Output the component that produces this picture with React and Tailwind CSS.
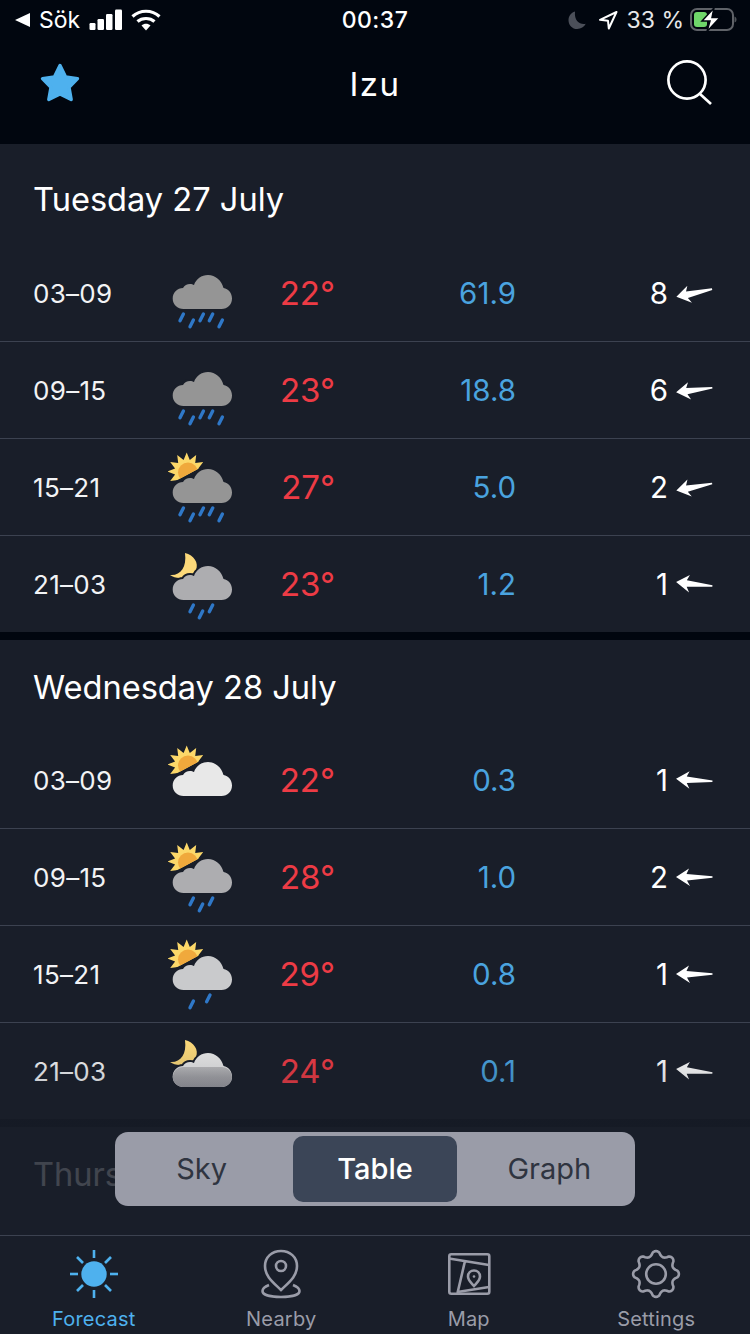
import { Fragment } from 'react';

const CLOUD = 'M15.5 54C9.5 54 4.7 49.5 4.7 43.5C4.7 37.5 9.5 33 15 33C16.5 30.5 19 29 22 29C23.5 29 25 29.5 26 30C28 24 33.5 20 40 20C47.5 20 53.5 25.5 55.5 33C60.5 34 64 38 64 43.5C64 49.5 59.5 54 53.5 54Z';

const DROPS = {
  5: [[13.7, 62.3], [23.7, 68.3], [33.7, 62.3], [43, 62.3], [52.7, 68.3]],
  3: [[23.7, 62.3], [33, 68.3], [43, 62.3]],
  2: [[23.7, 68.3], [40.3, 62.3]],
  0: [],
};

// 12 ray sun, one ray straight up
const sunPoints = Array.from({ length: 24 }, (_, i) => {
  const r = i % 2 === 0 ? 19 : 12;
  const a = (i * Math.PI) / 12 - Math.PI / 2;
  return `${(18.7 + r * Math.cos(a)).toFixed(1)},${(22.5 + r * Math.sin(a)).toFixed(1)}`;
}).join(' ');

const gearPath = Array.from({ length: 121 }, (_, i) => {
  const a = (i * Math.PI) / 60;
  const c = Math.cos(8 * a);
  const r = 20.5 + 2.4 * Math.sign(c) * Math.pow(Math.abs(c), 0.7);
  return `${i === 0 ? 'M' : 'L'}${(24 + r * Math.cos(a)).toFixed(2)} ${(24 + r * Math.sin(a)).toFixed(2)}`;
}).join('') + 'Z';

const WeatherIcon = ({ sky, cloud, drops = 0, fog }) => (
  <svg width="70" height="76" viewBox="0 0 70 76">
    {sky === 'sun' && (
      <g clipPath="url(#sky-cut)">
        <polygon points={sunPoints} fill="#fcd869" />
        <circle cx="20" cy="23.5" r="10" fill="#f0a93c" />
      </g>
    )}
    {sky === 'moon' && (
      <path d="M17 7C26 9 31 17 28 24C24 31 10 35 2 29C12 30 19 22 17 7Z" fill="#fcd97a" />
    )}
    <path d={CLOUD} fill={cloud} stroke="#191e29" strokeWidth="4" paintOrder="stroke" />
    {fog && <rect x="4.7" y="34" width="59.3" height="20" rx="10" fill="url(#fog-fill)" />}
    {DROPS[drops].map(([x, y], i) => (
      <line key={i} x1={x + 1.7} y1={y - 3.4} x2={x - 1.7} y2={y + 3.4} stroke="#2f78c8" strokeWidth="3.4" strokeLinecap="round" />
    ))}
  </svg>
);

const WindArrow = ({ angle }) => (
  <svg width="40" height="28" viewBox="-2 -14 40 28" className="overflow-visible">
    <polygon
      transform={`rotate(${angle} 18 0)`}
      points="0,0 13,-8.5 10.5,-3 36.5,-0.8 36.5,0.8 11,3.5 14,9"
      fill="#ffffff"
    />
  </svg>
);

const days = [
  {
    title: 'Tuesday 27 July',
    first: true,
    rows: [
      { time: '03–09', temp: '22°', rain: '61.9', wind: 8, angle: -12, icon: { cloud: '#959595', drops: 5 } },
      { time: '09–15', temp: '23°', rain: '18.8', wind: 6, angle: -7, icon: { cloud: '#959595', drops: 5 } },
      { time: '15–21', temp: '27°', rain: '5.0', wind: 2, angle: -11, icon: { sky: 'sun', cloud: '#959595', drops: 5 } },
      { time: '21–03', temp: '23°', rain: '1.2', wind: 1, angle: 6, icon: { sky: 'moon', cloud: '#adadb0', drops: 3 } },
    ],
  },
  {
    title: 'Wednesday 28 July',
    rows: [
      { time: '03–09', temp: '22°', rain: '0.3', wind: 1, angle: 4, icon: { sky: 'sun', cloud: '#e8e8e8' } },
      { time: '09–15', temp: '28°', rain: '1.0', wind: 2, angle: 0, icon: { sky: 'sun', cloud: '#adadb0', drops: 3 } },
      { time: '15–21', temp: '29°', rain: '0.8', wind: 1, angle: 0, icon: { sky: 'sun', cloud: '#c9cacc', drops: 2 } },
      { time: '21–03', temp: '24°', rain: '0.1', wind: 1, angle: 6, icon: { sky: 'moon', cloud: '#e8e8e8', fog: true } },
    ],
  },
  { title: 'Thursday 29 July', rows: [] },
];

const StatusBar = () => (
  <div className="grid h-[40px] grid-cols-[1fr_auto_1fr] items-center text-[23px] text-white">
    <div className="flex items-center">
      <svg width="16" height="14" viewBox="0 0 16 14" className="ml-[15px]">
        <polygon points="0,7 15,0 15,14" fill="#fff" />
      </svg>
      <span className="ml-[8px]">Sök</span>
      <svg width="34" height="22" viewBox="0 0 34 22" className="ml-[9px]">
        <rect x="0.5" y="14" width="6" height="7" rx="1.2" fill="#fff" />
        <rect x="8.5" y="10" width="6.5" height="11" rx="1.2" fill="#fff" />
        <rect x="17" y="5" width="6.5" height="16" rx="1.2" fill="#fff" />
        <rect x="26" y="0.5" width="7" height="20.5" rx="1.2" fill="#fff" />
      </svg>
      <svg width="30" height="24" viewBox="0 0 30 24" className="ml-[8px]">
        <path d="M1.5 8.5C9 1.5 21 1.5 28.5 8.5" fill="none" stroke="#fff" strokeWidth="3.2" />
        <path d="M6.5 13.5C11 9.5 19 9.5 23.5 13.5" fill="none" stroke="#fff" strokeWidth="3.2" />
        <path d="M10.5 17.5L15 22.5L19.5 17.5C17 15.3 13 15.3 10.5 17.5Z" fill="#fff" />
      </svg>
    </div>
    <span className="font-medium tracking-[0.5px]">00:37</span>
    <div className="flex items-center justify-end">
      <svg width="20" height="20" viewBox="0 0 20 20">
        <path d="M8 1.5C4 2.8 1.5 6 1.5 10.2C1.5 15.2 5.3 19 10.2 19C14 19 17 17 18.8 13.8C13 15 7 11 8 1.5Z" fill="#4b4f59" />
      </svg>
      <svg width="20" height="20" viewBox="0 0 20 20" className="ml-[11px]">
        <path d="M18.5 2L2 9.8L10 10.8L10.8 18.5Z" fill="none" stroke="#fff" strokeWidth="2" strokeLinejoin="round" />
      </svg>
      <span className="ml-[9px] text-[#e6e6e8]">33 %</span>
      <svg width="47" height="24" viewBox="0 0 47 24" className="ml-[6px] mr-[13px]">
        <rect x="1" y="1" width="42" height="21" rx="6" fill="none" stroke="#5f6268" strokeWidth="2" />
        <rect x="4" y="4" width="13" height="15" rx="3" fill="#6fd66a" />
        <path d="M44.5 8.5C46 9 46.5 10 46.5 11.5C46.5 13 46 14 44.5 14.5Z" fill="#4f5258" />
        <path d="M24 0L12 13H20L17 23.5L30 9.5H22Z" fill="#fff" stroke="#01060f" strokeWidth="1.5" />
      </svg>
    </div>
  </div>
);

const NavBar = () => (
  <div className="flex h-[104px] items-start justify-between">
    <svg width="44" height="44" viewBox="0 0 44 44" className="ml-[38px] mt-[21px]">
      <path d="M22 4.5L27.6 16L39.5 17.6L31 26.4L33.2 38.5L22 33L10.8 38.5L13 26.4L4.5 17.6L16.4 16Z" fill="#4eb1ee" stroke="#4eb1ee" strokeWidth="3.4" strokeLinejoin="round" />
    </svg>
    <span className="ml-[4px] mt-[20px] text-[33px] tracking-[1.5px] text-white">Izu</span>
    <svg width="50" height="50" viewBox="0 0 50 50" className="mr-[36px] mt-[18px]">
      <circle cx="23" cy="22" r="18.6" fill="none" stroke="#fff" strokeWidth="2.7" />
      <line x1="36" y1="36" x2="47" y2="46" stroke="#fff" strokeWidth="2.7" />
    </svg>
  </div>
);

const ForecastRow = ({ row, last }) => (
  <div className={`flex items-center pl-[33px] ${last ? 'h-[96px]' : 'h-[97px] border-b border-[#3c4250]'}`}>
    <span className="w-[135px] text-[26px] tracking-[0.3px] text-[#f2f3f5]">{row.time}</span>
    <div className="w-[70px]">
      <WeatherIcon {...row.icon} />
    </div>
    <span className="mt-[2px] w-[97px] text-right text-[33px] text-[#ed3b45]">{row.temp}</span>
    <span className="mt-[1px] w-[181px] text-right text-[29.5px] text-[#4aa3df]">{row.rain}</span>
    <span className="mt-[1px] w-[152px] text-right text-[29.5px] text-white">{row.wind}</span>
    <div className="ml-[6px]">
      <WindArrow angle={row.angle} />
    </div>
  </div>
);

const DaySection = ({ day }) => (
  <Fragment>
    <div className={`flex items-center pl-[33px] ${day.first ? 'h-[101px] pt-[10px]' : 'h-[92px] pt-[2px]'}`}>
      <h2 className="text-[32.6px] text-white">{day.title}</h2>
    </div>
    {day.rows.map((row, i) => (
      <ForecastRow key={i} row={row} last={i === day.rows.length - 1} />
    ))}
    {day.rows.length > 0 && <div className="h-[8px] bg-[#01060f]" />}
  </Fragment>
);

const SegmentedControl = () => (
  <div className="absolute left-[115px] top-[988px] grid h-[74px] w-[520px] grid-cols-3 items-center rounded-[13px] bg-[#9a9ca8] text-[29px] text-[#2f3440]">
    <span className="text-center">Sky</span>
    <div className="mx-auto flex h-[66px] w-[164px] items-center justify-center rounded-[10px] bg-[#3b4557] font-medium text-white">Table</div>
    <span className="pl-[2px] text-center">Graph</span>
  </div>
);

const tabStroke = { fill: 'none', stroke: '#9a9ca8', strokeWidth: 2.6 };

const tabs = [
  {
    label: 'Forecast',
    active: true,
    icon: (
      <svg width="52" height="52" viewBox="0 0 52 52">
        <circle cx="26" cy="26" r="12.7" fill="#4eb1ee" />
        <g stroke="#4eb1ee" strokeWidth="2.6">
          <line x1="26" y1="2" x2="26" y2="10" />
          <line x1="26" y1="42" x2="26" y2="50" />
          <line x1="2" y1="26" x2="10" y2="26" />
          <line x1="42" y1="26" x2="50" y2="26" />
          <line x1="9" y1="9" x2="15" y2="15" />
          <line x1="43" y1="9" x2="37" y2="15" />
          <line x1="9" y1="43" x2="15" y2="37" />
          <line x1="43" y1="43" x2="37" y2="37" />
        </g>
      </svg>
    ),
  },
  {
    label: 'Nearby',
    icon: (
      <svg width="52" height="52" viewBox="0 0 52 52">
        <path d="M26 42C19 35 10 29 10 18C10 9 17 3 26 3C35 3 42 9 42 18C42 29 33 35 26 42Z" {...tabStroke} />
        <circle cx="26" cy="18" r="5" {...tabStroke} />
        <path d="M14 37C9 39 7.5 41 7.5 43C7.5 47 16 49 26 49C36 49 44.5 47 44.5 43C44.5 41 43 39 38 37" {...tabStroke} />
      </svg>
    ),
  },
  {
    label: 'Map',
    icon: (
      <svg width="52" height="52" viewBox="0 0 52 52">
        <rect x="6.3" y="6.3" width="40" height="39.5" rx="2" {...tabStroke} />
        <path d="M6 10.5L46 17M22 13L14.5 45M14.5 44L46 39" {...tabStroke} />
        <path d="M31 38C28 34.5 25 32.5 25 28.5C25 25 27.7 22.5 31 22.5C34.3 22.5 37 25 37 28.5C37 32.5 34 34.5 31 38Z" {...tabStroke} />
        <circle cx="31" cy="28.5" r="1.3" fill="#9a9ca8" />
      </svg>
    ),
  },
  {
    label: 'Settings',
    icon: (
      <svg width="52" height="52" viewBox="-2 -2 52 52">
        <path d={gearPath} {...tabStroke} strokeLinejoin="round" />
        <circle cx="24" cy="24" r="9.8" {...tabStroke} />
      </svg>
    ),
  },
];

const TabBar = () => (
  <div className="grid h-[99px] shrink-0 grid-cols-4 border-t border-[#3c4250] bg-[#191e29]">
    {tabs.map((tab) => (
      <div key={tab.label} className="flex flex-col items-center pt-[12px]">
        {tab.icon}
        <span className={`mt-[7px] text-[20px] leading-[24px] tracking-[0.2px] ${tab.active ? 'text-[#4eb1ee]' : 'text-[#9a9ca8]'}`}>
          {tab.label}
        </span>
      </div>
    ))}
  </div>
);

export default function App() {
  return (
    <div className="flex h-[1334px] w-[750px] flex-col overflow-hidden bg-[#191e29] [font-family:Inter,sans-serif]">
      <svg width="0" height="0" className="absolute">
        <defs>
          <clipPath id="sky-cut">
            <polygon points="0,0 42,0 42,13.5 2,35 0,35" />
          </clipPath>
          <linearGradient id="fog-fill" x1="0" y1="0" x2="0" y2="1">
            <stop offset="0" stopColor="#bcbcbe" />
            <stop offset="0.5" stopColor="#a6a6aa" />
            <stop offset="1" stopColor="#9c9ca2" />
          </linearGradient>
        </defs>
      </svg>
      <header className="h-[144px] shrink-0 bg-[#01060f]">
        <StatusBar />
        <NavBar />
      </header>
      <main className="relative min-h-0 flex-1 overflow-hidden">
        {days.map((day) => (
          <DaySection key={day.title} day={day} />
        ))}
        <div className="pointer-events-none absolute inset-x-0 bottom-0 h-[195px] bg-[linear-gradient(to_bottom,rgba(25,30,41,0)_0%,rgba(25,30,41,0.2)_25%,rgba(25,30,41,0.85)_40%,rgba(25,30,41,0.8)_100%)]" />
        <SegmentedControl />
      </main>
      <TabBar />
    </div>
  );
}
